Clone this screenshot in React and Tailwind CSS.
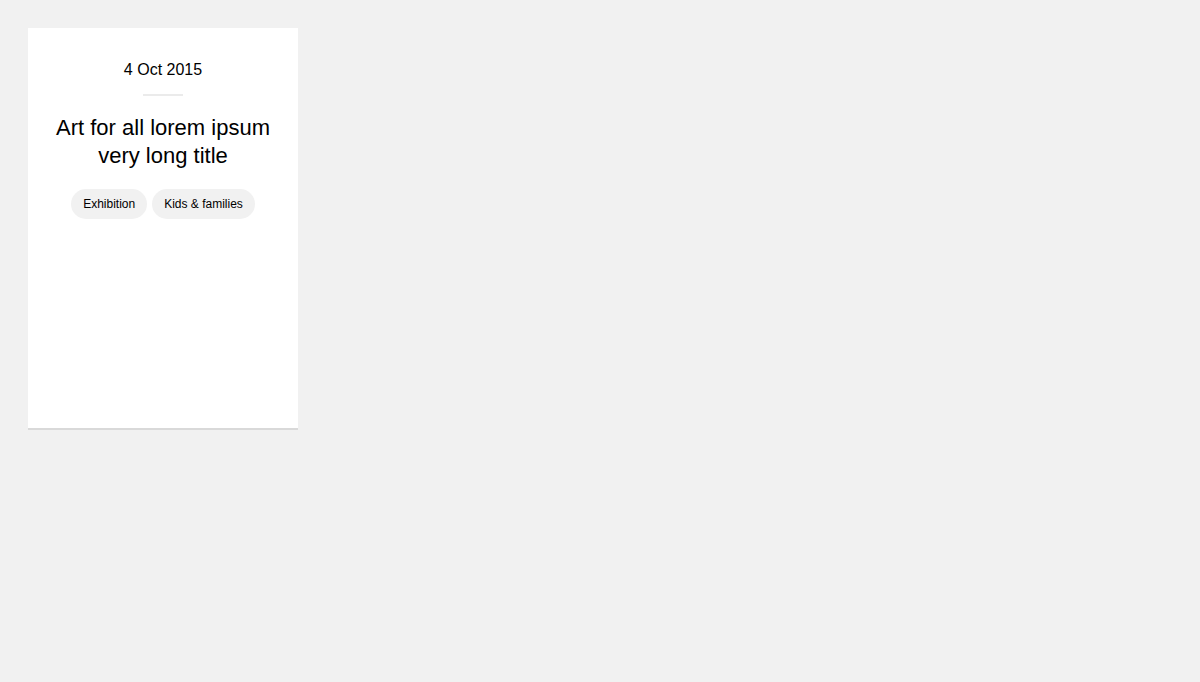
export default function App() {
  const tags = ['Exhibition', 'Kids & families']

  return (
    <div className="min-h-screen bg-[#f1f1f1] p-[28px]" style={{ fontFamily: '"Liberation Sans", Arial, sans-serif' }}>
      <article className="w-[270px] h-[402px] bg-white border-b-2 border-[#d9d9d9] flex flex-col items-center px-5 pt-[31px] text-black">
        <p className="text-[16px] leading-[22px]">4 Oct 2015</p>
        <div className="w-10 h-[2px] bg-[#ebebeb] mt-[13px]" />
        <h2 className="mt-[18px] text-[22px] leading-[28px] text-center">Art for all lorem ipsum very long title</h2>
        <ul className="mt-[19px] flex gap-[5px]">
          {tags.map((tag) => (
            <li key={tag} className="h-[30px] px-3 rounded-full bg-[#f1f1f1] text-[12px] flex items-center">
              {tag}
            </li>
          ))}
        </ul>
      </article>
    </div>
  )
}
